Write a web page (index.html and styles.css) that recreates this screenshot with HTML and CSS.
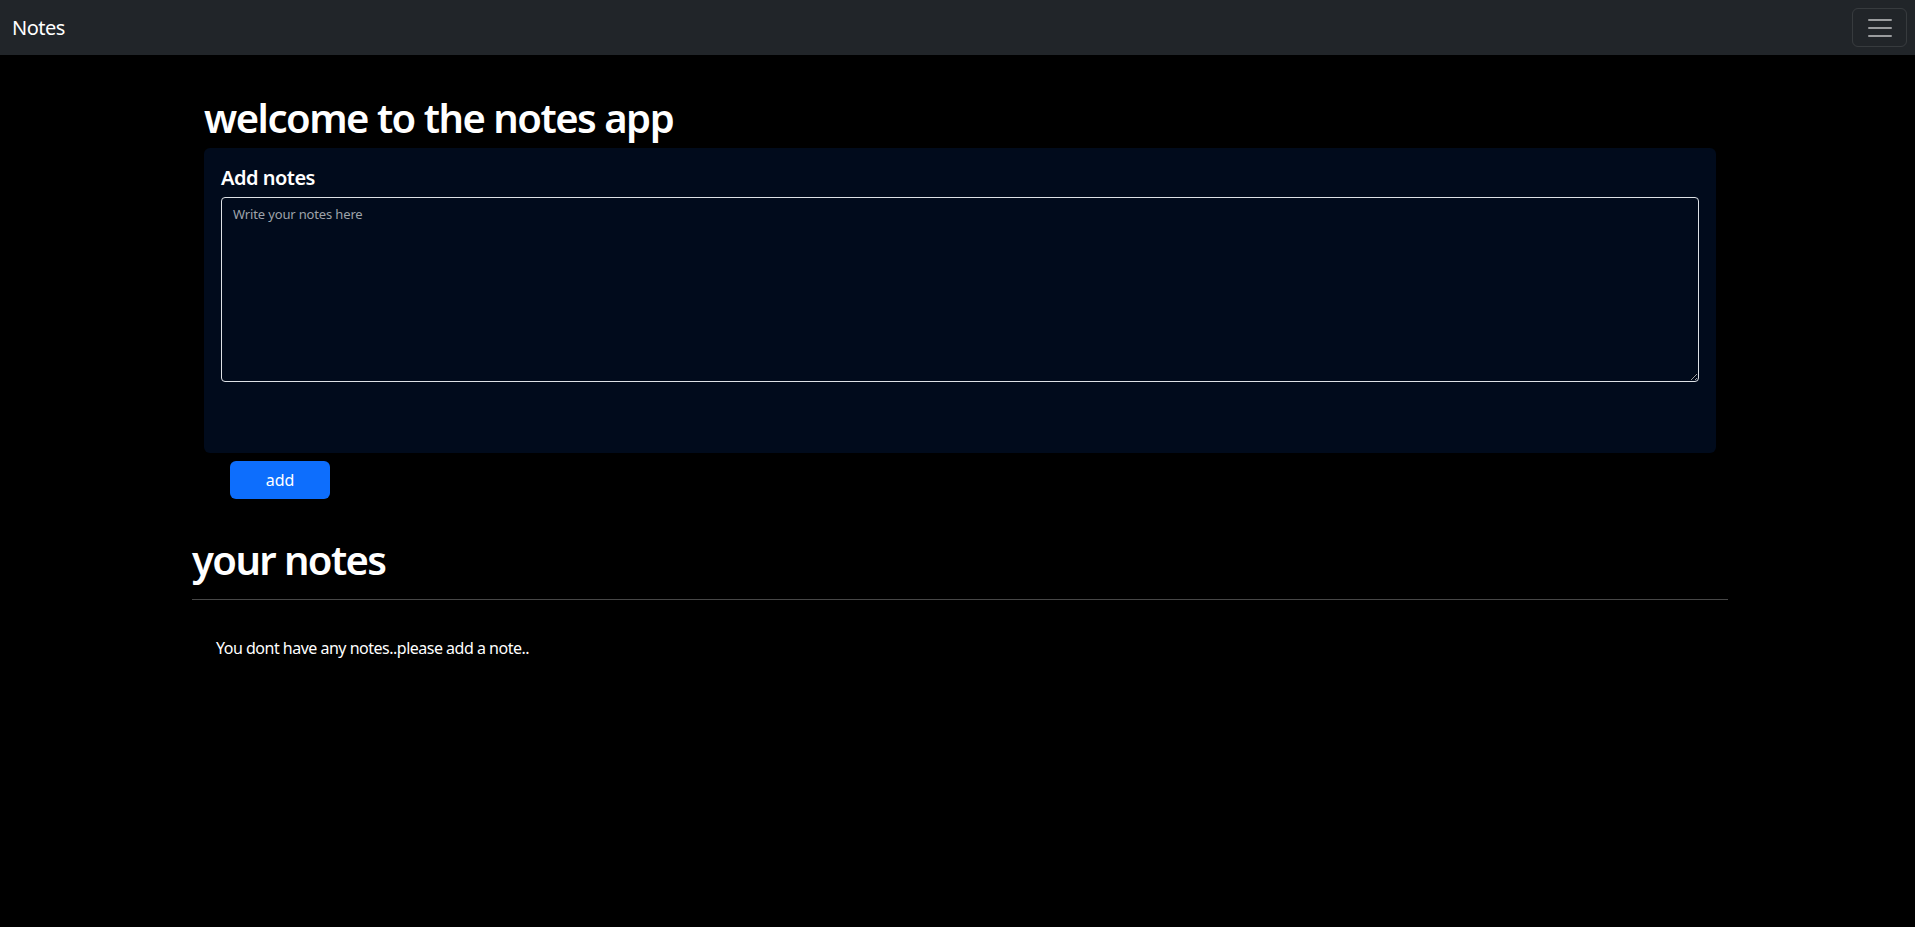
FILE: index.html
```html
<!DOCTYPE html>
<html lang="en">
<head>
<meta charset="utf-8">
<title>Notes</title>
<link rel="stylesheet" href="styles.css">
</head>
<body>
<nav class="navbar">
  <span class="brand">Notes</span>
  <button class="toggler" type="button" aria-label="Toggle navigation">
    <svg class="toggler-icon" viewBox="0 0 30 30" width="30" height="30"><path d="M4 7h22M4 15h22M4 23h22" stroke="rgba(255,255,255,0.55)" stroke-width="2" stroke-linecap="round" fill="none"/></svg>
  </button>
</nav>
<main class="page">
  <section class="intro">
    <h1 class="title">welcome to the notes app</h1>
    <div class="card">
      <h5 class="card-title">Add notes</h5>
      <textarea class="note-input" placeholder="Write your notes here"></textarea>
    </div>
    <button class="btn-add" type="button">add</button>
  </section>
  <h1 class="title title-notes">your notes</h1>
  <hr class="divider">
  <div class="notes">
    <p class="empty">You dont have any notes..please add a note..</p>
  </div>
</main>
</body>
</html>
```
FILE: styles.css
```css
* { box-sizing: border-box; }
html, body { margin: 0; padding: 0; }
body {
  background: #000;
  color: #fff;
  font-family: "Noto Sans", "Open Sans", sans-serif;
  font-size: 16px;
  line-height: 1.5;
  height: 927px;
}
.navbar {
  height: 55px;
  background: #212529;
  display: flex;
  align-items: center;
  justify-content: space-between;
  padding: 0 8px 0 12px;
}
.brand {
  font-size: 20px;
  line-height: 30px;
  letter-spacing: -0.5px;
  color: #fff;
}
.toggler {
  width: 55px;
  height: 39px;
  background: transparent;
  border: 1px solid rgba(255,255,255,0.1);
  border-radius: 6px;
  padding: 0;
  display: flex;
  align-items: center;
  justify-content: center;
}
.toggler-icon { display: block; }
.page {
  margin: 0 187px 0 192px;
}
.intro {
  padding: 0 12px;
}
.title {
  margin: 39px 0 6px;
  font-size: 40px;
  line-height: 48px;
  font-weight: 600;
  letter-spacing: -1.5px;
  color: #fff;
}
.card {
  background: #010b1c;
  border-radius: 6px;
  padding: 17px 17px 71px;
}
.card-title {
  margin: 0 0 7px;
  font-size: 20px;
  line-height: 24px;
  font-weight: 600;
  letter-spacing: -0.5px;
  padding-top: 1px;
  color: #fff;
}
.note-input {
  display: block;
  width: 100%;
  height: 185px;
  margin: 0;
  background: #010b1c;
  color: #fff;
  border: 1px solid #dee2e6;
  border-radius: 4px;
  padding: 6px 11px;
  font-family: inherit;
  font-size: 13px;
  line-height: 21px;
  letter-spacing: -0.15px;
  resize: vertical;
}
.note-input::placeholder { color: #9ea3aa; opacity: 1; }
.btn-add {
  display: block;
  margin: 8px 0 0 26px;
  width: 100px;
  height: 38px;
  background: #0d6efd;
  color: #fff;
  border: 0;
  border-radius: 6px;
  font-family: inherit;
  font-size: 16px;
  line-height: 24px;
}
.title-notes {
  margin: 37px 0 0;
  letter-spacing: -1.6px;
}
.divider {
  margin: 15px 0 0;
  border: 0;
  border-top: 1px solid #474747;
  height: 0;
}
.notes {
  padding: 36px 24px 0;
}
.empty {
  margin: 0;
  font-size: 16px;
  line-height: 24px;
  letter-spacing: -0.5px;
  color: #fff;
}
```
